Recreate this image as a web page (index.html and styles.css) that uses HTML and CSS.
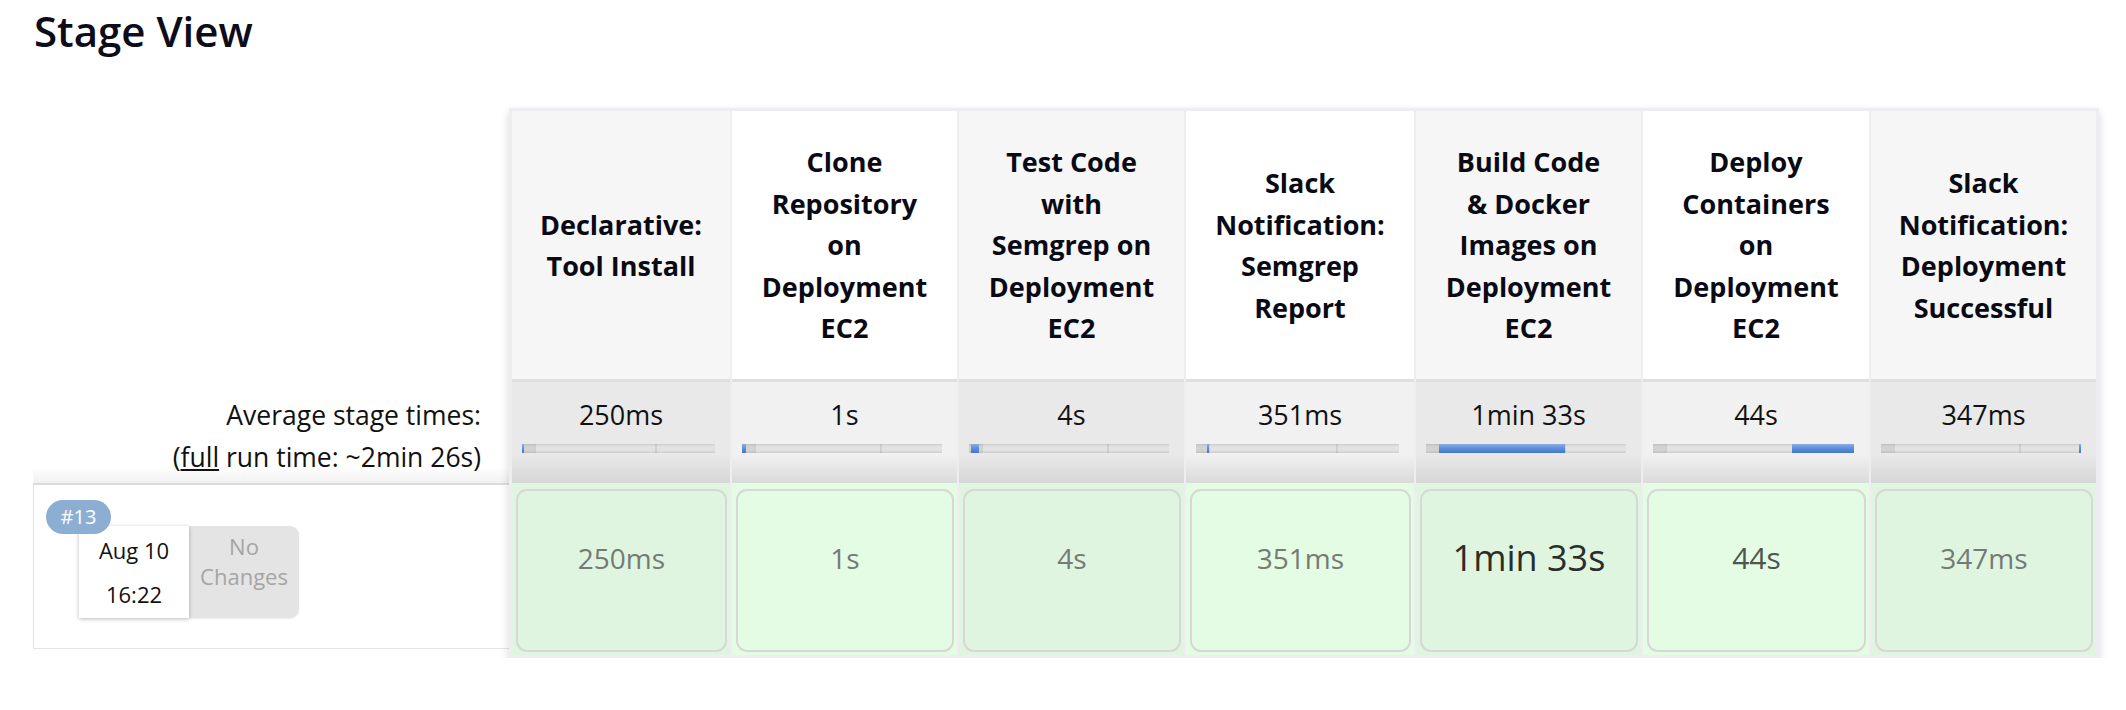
FILE: index.html
```html
<!DOCTYPE html>
<html>
<head>
<meta charset="utf-8">
<link rel="stylesheet" href="styles.css">
<title>Stage View</title>
</head>
<body>
<h1 class="title">Stage View</h1>
<div class="stage-view">
  <div class="left-panel">
    <div class="avg-label">
      <div>Average stage times:</div>
      <div>(<span class="u">full</span> run time: ~2min 26s)</div>
    </div>
    <div class="run-row">
      <div class="run-card">
        <span class="badge">#13</span>
        <div class="run-date"><div>Aug 10</div><div>16:22</div></div>
        <div class="run-changes">No<br>Changes</div>
      </div>
    </div>
  </div>
  <div class="table">
    <div class="row header">
      <div class="cell">Declarative:<br>Tool Install</div>
      <div class="cell">Clone<br>Repository<br>on<br>Deployment<br>EC2</div>
      <div class="cell">Test Code<br>with<br>Semgrep on<br>Deployment<br>EC2</div>
      <div class="cell">Slack<br>Notification:<br>Semgrep<br>Report</div>
      <div class="cell">Build Code<br>&amp; Docker<br>Images on<br>Deployment<br>EC2</div>
      <div class="cell">Deploy<br>Containers<br>on<br>Deployment<br>EC2</div>
      <div class="cell">Slack<br>Notification:<br>Deployment<br>Successful</div>
    </div>
    <div class="row avg">
      <div class="cell"><div class="avg-time">250ms</div><div class="bar"><span class="fill" style="left:0%;width:1%"></span></div></div>
      <div class="cell"><div class="avg-time">1s</div><div class="bar"><span class="fill" style="left:0%;width:2%"></span></div></div>
      <div class="cell"><div class="avg-time">4s</div><div class="bar"><span class="fill" style="left:1%;width:4%"></span></div></div>
      <div class="cell"><div class="avg-time">351ms</div><div class="bar"><span class="fill" style="left:5.5%;width:1%"></span></div></div>
      <div class="cell"><div class="avg-time">1min 33s</div><div class="bar"><span class="fill" style="left:6.5%;width:63%"></span></div></div>
      <div class="cell"><div class="avg-time">44s</div><div class="bar"><span class="fill" style="left:69%;width:31%"></span></div></div>
      <div class="cell"><div class="avg-time">347ms</div><div class="bar"><span class="fill" style="left:99%;width:1%"></span></div></div>
    </div>
    <div class="row build">
      <div class="cell"><div class="box"><span class="dur light">250ms</span></div></div>
      <div class="cell"><div class="box"><span class="dur light">1s</span></div></div>
      <div class="cell"><div class="box"><span class="dur light">4s</span></div></div>
      <div class="cell"><div class="box"><span class="dur light">351ms</span></div></div>
      <div class="cell"><div class="box"><span class="dur big">1min 33s</span></div></div>
      <div class="cell"><div class="box"><span class="dur mid">44s</span></div></div>
      <div class="cell"><div class="box"><span class="dur light">347ms</span></div></div>
    </div>
  </div>
</div>
</body>
</html>
```
FILE: styles.css
```css
html, body {
  margin: 0;
  padding: 0;
  background: #ffffff;
}
body {
  font-family: "Open Sans", "Noto Sans", "Liberation Sans", sans-serif;
  color: #0b0b16;
}
.title {
  margin: 8px 0 55px 34px;
  font-size: 42px;
  line-height: 45px;
  font-weight: 600;
  color: #0c0c1a;
}
.stage-view {
  display: flex;
  align-items: flex-start;
  padding-left: 33px;
}
.left-panel {
  width: 476px;
  margin-top: 272px;
  display: flex;
  flex-direction: column;
}
.avg-label {
  height: 89px;
  padding: 14px 28px 0 0;
  text-align: right;
  font-size: 26.5px;
  line-height: 42px;
  color: #111;
  background: linear-gradient(to bottom, #ffffff 85%, #f1f1f1 100%);
  border-bottom: 2px solid #dcdcdc;
}
.u { text-decoration: underline; }
.run-row {
  height: 122px;
  border-left: 1px solid #e4e4e4;
  border-bottom: 1px solid #e4e4e4;
  padding: 41px 0 0 45px;
}
.run-card {
  position: relative;
  display: flex;
}
.badge {
  position: absolute;
  left: -33px;
  top: -26px;
  width: 65px;
  height: 34px;
  border-radius: 17px;
  background: #8caed3;
  color: #ffffff;
  font-size: 20px;
  line-height: 34px;
  text-align: center;
  z-index: 2;
}
.run-date {
  width: 110px;
  height: 90px;
  padding-top: 2px;
  background: #ffffff;
  box-shadow: 0 1px 4px rgba(0,0,0,0.28);
  text-align: center;
  font-size: 22px;
  line-height: 44px;
  color: #111;
  position: relative;
  z-index: 1;
}
.run-changes {
  width: 110px;
  height: 87px;
  padding-top: 5px;
  background: #e4e4e4;
  border-radius: 0 9px 9px 0;
  text-align: center;
  font-size: 22px;
  line-height: 30px;
  color: #a5a5a5;
  box-shadow: 0 1px 2px rgba(0,0,0,0.08);
}
.table {
  background: #eeeef2;
  padding: 3px;
  box-shadow: 0 4px 9px rgba(0,0,0,0.16);
}
.row {
  display: grid;
  grid-template-columns: 218px 225px 225px 228px 225px 226px 225px;
  column-gap: 2px;
}
.header .cell {
  height: 268px;
  display: flex;
  align-items: center;
  justify-content: center;
  text-align: center;
  font-size: 27px;
  line-height: 41.5px;
  font-weight: 700;
  color: #0a0a14;
  background: #ffffff;
}
.header .cell:nth-child(odd) { background: #f6f6f6; }
.avg .cell {
  height: 101px;
  border-top: 3px solid #dfdfdf;
  background: linear-gradient(to bottom, #f1f1f1 0%, #f1f1f1 72%, #dadada 100%);
}
.avg .cell:nth-child(odd) {
  background: linear-gradient(to bottom, #e9e9e9 0%, #e9e9e9 72%, #d6d6d6 100%);
}
.avg-time {
  padding-top: 15px;
  text-align: center;
  font-size: 27px;
  line-height: 36px;
  color: #111;
}
.bar {
  position: relative;
  margin: 11px 15px 0 10px;
  height: 9px;
  background:
    linear-gradient(to right, rgba(0,0,0,0.07) 0, rgba(0,0,0,0.07) 6%, transparent 6%),
    linear-gradient(to bottom, #cdcdcd 0, #e2e2e2 30%, #e2e2e2 70%, #cdcdcd 100%);
}
.bar::before,
.bar::after {
  content: "";
  position: absolute;
  top: 0;
  bottom: 0;
  width: 2px;
  background: rgba(0,0,0,0.08);
}
.bar::before { left: 6%; }
.bar::after { left: 69%; }
.fill {
  position: absolute;
  top: 0;
  bottom: 0;
  min-width: 2px;
  background: linear-gradient(to bottom, #8aaee3 0, #5d8ed8 50%, #4677cb 100%);
  z-index: 1;
}
.build .cell {
  height: 163px;
  padding: 6px 3px 3px 4px;
  background: #e4fce4;
}
.build .cell:nth-child(odd) { background: #dff5df; }
.box {
  box-sizing: border-box;
  height: 163px;
  border: 2px solid #d6d8d6;
  border-radius: 11px;
  display: flex;
  align-items: center;
  justify-content: center;
  padding-bottom: 26px;
}
.dur { white-space: nowrap; }
.dur.light { font-size: 28px; color: #747b74; }
.dur.mid { font-size: 30px; color: #4f554f; }
.dur.big { font-size: 36px; color: #2a2e2a; }
```
